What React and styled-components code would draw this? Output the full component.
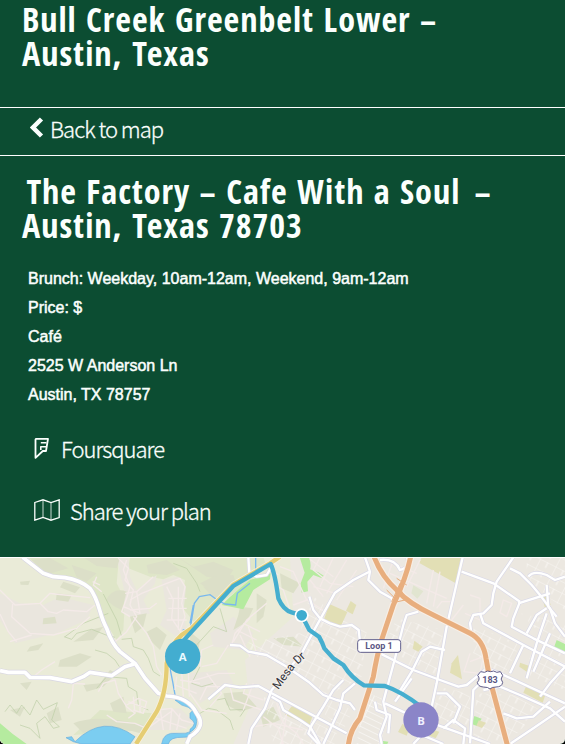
import React from 'react';
import styled, { createGlobalStyle } from 'styled-components';

const GlobalStyle = createGlobalStyle`
  *, *::before, *::after { box-sizing: border-box; }
  body { margin: 0; background: #000; }
`;

const Page = styled.main`
  display: flex;
  flex-direction: column;
  min-height: 100vh;
  overflow: hidden;
  border-radius: 0 0 5px 5px;
  background: #0c4d32;
  color: #fbfffd;
  font-family: "Liberation Sans", Arial, sans-serif;
`;

const Title = styled.h1`
  margin: 0;
  padding: 2px 40px 37px 22px;
  font: bold 34px/34px "Open Sans Condensed", "Roboto Condensed", sans-serif;
  letter-spacing: 1px;
  white-space: pre-wrap;
`;

const PlaceTitle = styled(Title).attrs({ as: 'h2' })`
  padding: 18px 40px 22px 22px;
`;

const BackBar = styled.nav`
  display: flex;
  height: 49px;
  padding: 0 30px;
  border-top: 1px solid #fff;
  border-bottom: 1px solid #fff;
`;

const ActionLink = styled.a`
  display: flex;
  align-items: center;
  gap: ${({ $gap }) => $gap}px;
  height: 40px;
  color: inherit;
  font: 300 22px/32px "Noto Sans CJK JP", "Noto Sans", sans-serif;
  letter-spacing: -1px;
  text-decoration: none;
  -webkit-text-stroke: 0.3px currentColor;
`;

const Details = styled.div`
  padding: 0 28px;
  font-size: 16px;
  line-height: 29px;
  -webkit-text-stroke: 0.5px currentColor;
`;

const Line = styled.p`
  margin: 0;
`;

const Actions = styled.div`
  display: flex;
  flex-direction: column;
  align-items: flex-start;
  gap: 22px;
  padding: 19px 34px 27px;
`;

const MapView = styled.svg`
  display: block;
  flex: 1 0 187px;
  width: 100%;
  height: 187px;
  border-top: 1px solid #fff;
  background: #ece8e1;
`;

const scrub = [
  'M250 22L360 25 350 55 290 48Z', 'M95 30L150 24 205 55 145 72Z', 'M215 45L290 70 260 95 230 82Z',
  'M190 95L240 112 225 130 180 112Z', 'M170 130L215 135 205 155 168 150Z', 'M318 150Q340 110 380 125L365 180 345 170Z',
  'M440 45L500 30 540 60 500 75 445 70Z', 'M60 95L90 92 85 105 62 104Z', 'M130 205L165 200 170 220 128 223Z',
  'M270 240L310 230 280 270 220 275Z', 'M180 330L240 310 275 320 230 350 175 350Z', 'M90 290L130 280 115 300 80 305Z',
  'M390 200L440 190 430 230 405 250Z', 'M440 245L470 230 500 255 480 300 455 275Z', 'M60 400L95 395 80 420Z',
  'M250 405L300 400 330 360 350 370 310 410 260 425Z', 'M330 460L370 440 380 490 340 485Z', 'M220 520Q290 490 430 525L420 550Q310 515 250 550Z',
  'M530 20L580 50 640 35 700 60 680 90 620 80Z', 'M610 110L680 95 690 130 640 145Z', 'M30 480L75 470 60 500Z', 'M140 490L175 470 185 510 150 520Z',
  'M720 170L760 175 740 215 700 240 715 195Z', 'M770 130L800 150 790 200 770 220Z', 'M840 70L900 100 880 130 845 115Z',
  'M570 245L600 270 590 340 572 360Z', 'M670 430L730 425 770 470 720 485 680 465Z', 'M780 490L820 470 840 510 790 530Z', 'M600 100L640 80 700 75 710 105 640 130Z', 'M820 265L880 260 910 290 850 285Z',
];

const woodland = [
  'M390 22L790 22 800 50 730 110 650 165 585 220 545 170 555 90 520 75 490 88 450 80 385 55Z',
  'M85 22L385 22 355 45 350 100 375 150 370 240 350 270 315 215 285 135 225 90 130 65Z',
  'M300 480L460 490 440 540 220 555Z',
];

const towns = [
  'M350 25L385 22 390 80 410 120 470 75 465 100 430 150 450 190 400 205 370 185 375 130Z',
  'M485 90L535 80 558 110 550 190 560 240 530 260 480 225 500 180Z',
  'M0 130L60 160 130 165 180 140 280 165 260 210 170 250 45 280 0 210Z',
  'M630 250L700 200 760 250 730 300 640 290Z', 'M460 480L540 475 585 520 540 540 430 540Z', 'M570 370L680 360 700 400 600 460 570 430Z',
];

const parks = [
  ['#b5eb9f', 'M665 165Q690 140 720 115L750 90 812 70 810 88 760 120 730 178 700 172Z'],
  ['#b5eb9f', 'M899 22L927 22Q935 45 930 58L955 67 971 77 964 84 940 75 922 95 924 124 905 128 902 100 914 68Z'],
  ['#b5eb9f', 'M0 520Q35 552 80 582L10 582 0 570Z'],
  ['#b5eb9f', 'M1670 270L1695 282 1695 311 1662 292Z'], ['#b5eb9f', 'M1423 498L1445 506 1430 528 1416 522Z'], ['#b5eb9f', 'M1145 572L1165 575 1162 582 1140 582Z'],
  ['#e2dfb5', 'M988 162L1042 186 1022 230 972 208Z'], ['#e2dfb5', 'M1052 153L1069 165 1058 193 1038 182Z'],
  ['#e2dfb5', 'M876 468L938 496 928 528 855 494Z'], ['#e2dfb5', 'M1265 22L1388 22 1370 101 1258 39Z'],
  ['#e2dfb5', 'M1355 340L1374 315 1386 388 1350 368Z'], ['#e2dfb5', 'M1243 272L1268 290 1255 305 1238 296Z'],
  ['#e2dfb5', 'M1625 136L1643 140 1652 164 1635 174Z'], ['#e2dfb5', 'M1560 338L1595 350 1587 370 1558 350Z'],
  ['#e2dfb5', 'M1580 405L1637 433 1628 458 1570 428Z'], ['#e2dfb5', 'M1436 511L1458 518 1446 534 1429 527Z'],
  ['#e2dfb5', 'M1207 522L1230 530 1220 557 1194 546Z'], ['#e2dfb5', 'M1290 537L1318 545 1307 565 1284 556Z'], ['#e1e5d0', 'M1240 106L1270 124 1252 146 1234 130Z'],
];

const contours = [
  'M192 260L215 268 230 250 275 238 318 255 345 262', 'M285 300L320 310 345 330 358 350', 'M310 132L350 210 365 260',
  'M520 40L560 55 590 100 600 125', 'M365 268L395 265 400 290 430 300 445 325 460 365 480 378', 'M15 485L30 465 50 490 65 465 90 495 110 450 130 478 172 458 155 510 178 530',
  'M178 530L160 535 135 500 110 520 120 565 90 535 60 525', 'M290 415L320 380 380 385 385 410 410 425 415 465 445 480', 'M195 260L250 220 325 190',
  'M660 175L680 245 640 230 585 290', 'M600 350L575 400 605 410 640 400', 'M600 490L625 475 650 480 690 510 700 540', 'M650 450L675 445 690 480 735 478 720 500',
];

const lanes = [
  'M0 120L45 165 120 160 150 130 165 132 270 143', 'M120 160L145 185 170 190 190 180 260 185 285 165', 'M38 162L35 200 90 250 160 255 230 235 270 200',
  'M0 192L25 245 50 275 M30 275L95 255', 'M165 335L125 360 95 385 M290 80L280 105 305 125 M278 95L300 105', 'M355 25L385 55 375 90 400 120 390 165 410 200 380 245 345 275',
  'M380 30L370 60 390 110 380 145 365 185 390 200', 'M410 125L460 80 M390 150L425 130 500 100 540 85 555 110 545 160 555 200 540 240', 'M400 200L440 250 460 290 470 350 485 375',
  'M375 130L410 125 420 190 370 170 M390 180L450 175 470 160', 'M500 110L520 150 515 205 545 250 M535 110L535 240 M505 145H560 M505 175H560 M500 210H560', 'M220 400L215 450 205 475 M220 400L255 402',
  'M295 425L310 400 345 390 355 430 380 470 405 490 385 505 M320 495L350 515 405 520 440 535', 'M380 465L415 445 440 455 430 490 400 480 M400 440L405 490 M420 450L420 490 M385 455L440 475',
  'M450 525L470 480 515 475 545 510 580 520 M455 500L560 535 M480 475L490 540 M515 475L510 540 M540 490L530 540 M450 530L520 480', 'M540 390L600 400 M530 380L525 420 M545 365L550 440 M565 365L568 440 M525 405L590 430',
  'M530 320L525 300 560 280 565 230 M555 300L600 310', 'M695 285L705 250 750 205 M710 240L770 270 M730 220L780 245 M640 285L605 300 600 350 M685 285L650 340 605 350', 'M720 255L750 320 M745 230L770 310 M700 275L740 210 800 160',
  'M570 395L655 370 705 370 M600 450L620 410 670 410 M570 430L605 480 680 490 M620 370L665 430 630 470', 'M740 400L730 430 790 450 M760 400L730 480 M690 410L700 450 785 480', 'M830 460L850 520 890 550 910 582 M860 490L845 582 M790 500L835 535 850 582 M760 530L820 520 910 540',
  'M820 100L850 120 870 180 M800 50L835 75 M840 50L880 65 920 150', 'M930 28L1000 80 M960 22L940 60 990 100 1060 110 M1000 22L960 110 M1040 30L980 130 M1070 60L1010 150', 'M920 150L970 180 M880 165L935 145 M940 110L1005 130 M930 90L970 140',
  'M1395 190L1440 210 1440 145 1410 135 M1180 30L1150 115 M1190 45L1250 70 M1260 30L1220 110 M1300 60L1280 160 M1320 65L1300 170 M1170 70L1340 145',
  'M1310 175L1325 155H1355 M1390 165L1355 210 M1510 150L1535 160 1520 200 1500 188Z', 'M1410 310L1392 365 1440 370 1450 320 1410 335',
];

const roads = [
  'M625 448L675 405 720 412 775 408 815 430 1040 550', 'M690 285L720 287 745 305 800 315 860 350 925 395 970 435 1010 450 1050 460 1065 480',
  'M928 140L940 180 960 205 990 220 1020 230 1055 225 1076 240 1080 275', 'M1108 65L1060 90 1005 128 940 245 905 310 815 420 795 475 755 535 745 582',
  'M815 440L840 455 850 480 900 510 930 530 960 582', 'M1030 390L1000 420 970 470 935 525 925 550 955 582', 'M1065 400L1030 430 1020 475 970 582',
  'M745 22L748 70 770 80 800 75 815 50', 'M1095 22L1110 65 1105 90 1140 125 1175 145 1180 180', 'M1140 30Q1185 25 1200 60Q1235 50 1220 22', 'M1230 30L1210 105 1180 170',
  'M1255 185L1220 195 1210 225 1185 325 1150 455 1160 500 1140 555 1145 582', 'M1388 22L1340 230 1310 400 1295 470 1290 520', 'M1195 430L1235 365 1265 305 1290 290 1335 300',
  'M1140 310L1240 360 1320 390 1375 410 1400 405 1460 355 1500 370 1695 460', 'M1385 65L1480 100 1560 155', 'M1540 22L1490 95 1480 130 1475 165 1450 190 1420 195 1410 220 1415 255',
  'M1440 190L1450 220 1580 290 1695 350', 'M1560 155L1540 205 1535 230 1600 265 1695 310', 'M1530 55L1560 70 1595 105 1620 135 1650 175 1665 220 1695 260', 'M1585 80Q1600 60 1640 75L1665 90 1695 80',
  'M1555 160L1650 130 M1640 105L1645 170 1670 200', 'M1640 175L1610 195 1580 250 M1640 190L1610 280 1580 385', 'M1650 250L1600 365 M1570 285L1530 370',
  'M1460 355L1445 395 1420 420 1410 580', 'M1310 430L1340 430 1380 470 1360 520', 'M1155 460L1240 500 1340 535 1470 582', 'M1695 470L1600 535 1530 582',
  'M1450 420L1500 410 1560 435 1650 475 1695 515', 'M1510 490L1550 505 1600 500 1650 455 M1620 440L1650 400 1695 350', 'M1240 582L1265 555 1330 582 M1330 535L1360 510 1395 535 1390 582', 'M1125 455L1130 480 1170 495 1165 550', 'M1235 385L1185 455',
];

const mainRoads = ['M68 22L130 70 160 80 195 83Q240 90 270 115C300 155 295 190 320 235Q335 280 360 305L405 340 435 385 475 430 500 438Q565 440 590 490Q620 530 570 560L560 582', 'M0 362L25 367H75L90 382 150 383 215 395 250 380 270 367 335 377 375 350 403 342'];

const route = 'M548 275L575 245 700 108 812 42Q825 70 835 145Q850 180 875 187L905 196 928 240 957 260Q968 280 973 295L1000 325 1030 345Q1055 385 1092 406L1155 408Q1205 425 1263 470';

function BackIcon() {
  return (
    <svg width="14" height="22" viewBox="0 0 14 22" aria-hidden="true">
      <path d="M11.500 2L3 10.500 11.500 19" fill="none" stroke="currentColor" strokeWidth="4.500" />
    </svg>
  );
}

function FoursquareIcon() {
  return (
    <svg width="17" height="22" viewBox="0 0 17 22" fill="none" stroke="currentColor" strokeWidth="1.800" strokeLinejoin="round" aria-hidden="true">
      <path d="M2 1.800H14L12 14H8.800L1.500 20.800V2.500Z" />
      <path d="M12.500 5.800H6.800M12 9.800H6.800V13" strokeWidth="1.600" />
    </svg>
  );
}

function FoldedMapIcon() {
  return (
    <svg width="26" height="22" viewBox="0 0 26 22" fill="none" stroke="currentColor" aria-hidden="true">
      <path d="M.8 3.500L9 .8 17 3.500 25.200 .8V18.500L17 21.200 9 18.500 .8 21.200Z" strokeWidth="1.300" />
      <path d="M9 1V18.500M17 3.500V21" strokeWidth=".8" />
    </svg>
  );
}

function RouteMap() {
  return (
    <MapView viewBox="0 24 1695 558" preserveAspectRatio="xMidYMid slice" role="img" aria-label="Route from A to B">
      <defs>
        <pattern id="blocks" width="52" height="31" patternUnits="userSpaceOnUse" patternTransform="rotate(27)">
          <path d="M0 0H52M0 0V31M26 0V18" fill="none" stroke="#fbf9f7" strokeWidth="2.500" />
        </pattern>
        <pattern id="narrowBlocks" width="75" height="17" patternUnits="userSpaceOnUse" patternTransform="rotate(26)">
          <path d="M0 0H75M0 0V17" fill="none" stroke="#fff" strokeWidth="3" />
        </pattern>
        <path id="mesaPath" d="M835 420L886 350 964 280" />
      </defs>
      <path fill="#eaebd8" d="M0 22H870L880 200 735 330 750 470 700 582H0Z" />
      {woodland.map((d) => <path key={d} d={d} fill="#dfe6c8" />)}
      {towns.map((d) => <path key={d} d={d} fill="#eae6de" />)}
      {scrub.map((d) => <path key={d} d={d} fill="#dcdfc8" />)}
      <g fill="none" stroke="#bbcda4" strokeWidth="2">
        {contours.map((d) => <path key={d} d={d} />)}
      </g>
      <path fill="url(#blocks)" d="M735 280L900 250 930 130 1000 190 1100 240 1085 380 980 440 860 350 740 310ZM1190 205L1330 240 1305 390 1140 310ZM1420 225L1560 285 1510 380 1420 310ZM1560 190L1695 220V420L1570 370 1620 250ZM1310 410L1410 430V540L1300 500ZM1430 430L1540 435 1620 480 1520 582 1420 570ZM1580 22H1695V180L1580 90ZM790 440L1010 550V582H820ZM990 450L1060 480 1030 540 970 490Z" />
      <path fill="url(#narrowBlocks)" d="M1095 425L1155 450 1165 500 1140 582H1070Z" />
      {parks.map(([fill, d]) => <path key={d} d={d} fill={fill} />)}
      <path fill="#7bcdf1" stroke="#68ade0" strokeWidth="2" d="M198 563L215 560 225 575Q310 490 405 560L390 582H245L220 575ZM525 450L545 465Q590 475 590 515Q590 555 530 550Q490 545 485 582H505Q510 560 550 562Q610 560 600 515Q605 475 545 450ZM570 490L582 478Q605 500 600 535L570 552V538Q595 520 570 505Z" />
      <path fill="none" stroke="#79b8ee" strokeWidth="4" d="M510 355L518 395 526 440M548 240L570 240 583 160 598 140 630 134 652 150 675 162 707 165 712 130 750 100M570 220L580 165M767 22V60" />
      <g fill="none" stroke="#f4eae8" strokeWidth="4" strokeLinejoin="round">
        {lanes.map((d) => <path key={d} d={d} />)}
      </g>
      <g fill="none" stroke="#dbdae7" strokeWidth="11" strokeLinejoin="round">
        {roads.map((d) => <path key={d} d={d} />)}
      </g>
      <g fill="none" stroke="#fff" strokeWidth="7" strokeLinejoin="round">
        {roads.map((d) => <path key={d} d={d} />)}
      </g>
      {[['#d9d7e3', 15], ['#fff', 11]].map(([color, width]) => (
        <g key={color} fill="none" stroke={color} strokeWidth={width} strokeLinejoin="round">
          {mainRoads.map((d) => <path key={d} d={d} />)}
        </g>
      ))}
      {[['#f6f0dc', 18], ['#e5cd73', 13]].map(([color, width]) => (
        <path key={color} fill="none" stroke={color} strokeWidth={width} d="M408 582L470 485Q500 430 500 340Q510 285 545 255L575 235 700 104 810 40 840 20" />
      ))}
      {[['#f8eee5', 22], ['#e8ae7e', 15]].map(([color, width]) => (
        <g key={color} fill="none" stroke={color} strokeWidth={width}>
          <path d="M1232 20Q1220 80 1180 165L1143 275Q1130 320 1120 380L1080 505Q1050 540 1045 585" />
          <path d="M1122 20Q1145 80 1190 120Q1225 160 1300 195L1410 250Q1450 270 1458 325L1470 390 1522 585" />
        </g>
      ))}
      <path fill="none" stroke="#e8ae7e" strokeWidth="3" d="M1175 155L1200 100M1200 110L1215 150 1180 158M1185 145L1160 120M1220 105L1190 85" />
      <path d={route} fill="none" stroke="#45aecf" strokeWidth="13" strokeLinejoin="round" />
      <circle cx="905" cy="196" r="21" fill="#fff" />
      <circle cx="905" cy="196" r="16" fill="#3eaccf" />
      <text fontFamily="Roboto, sans-serif" fontSize="35" fill="#34343a" stroke="#f5f1ed" strokeWidth="5" paintOrder="stroke">
        <textPath href="#mesaPath">Mesa Dr</textPath>
      </text>
      <g fontFamily="Roboto, sans-serif" fontWeight="700" textAnchor="middle" fill="#5b5785">
        <rect x="1073" y="269" width="129" height="38" rx="8" fill="#fff" stroke="#625f8c" strokeWidth="3" />
        <text x="1137" y="298" fontSize="27">Loop 1</text>
        <path fill="#fff" stroke="#625f8c" strokeWidth="3" d="M1442 365Q1455 370 1463 363Q1472 367 1481 363Q1490 370 1501 365L1508 376Q1499 388 1508 397Q1506 411 1488 411Q1475 411 1470 417Q1465 411 1450 411Q1434 410 1432 397Q1442 387 1433 376Z" />
        <text x="1470" y="398" fontSize="27">183</text>
      </g>
      <g fontFamily="Open Sans, sans-serif" fontWeight="700" fontSize="34" textAnchor="middle" fill="#fff">
        <circle cx="548" cy="319" r="53" fill="#43add0" />
        <text x="548" y="333" fill="#eafaff">A</text>
        <circle cx="1263" cy="510" r="53" fill="#8b85c8" />
        <text x="1263" y="524" fill="#f0efff">B</text>
      </g>
    </MapView>
  );
}

export default function App() {
  return (
    <Page>
      <GlobalStyle />
      <Title>Bull Creek Greenbelt Lower – Austin, Texas</Title>
      <BackBar>
        <ActionLink href="#map" $gap={6}><BackIcon />Back to map</ActionLink>
      </BackBar>
      <PlaceTitle>{'\u200aThe Factory – Cafe With a Soul\u00a0\u200a– Austin, Texas 78703'}</PlaceTitle>
      <Details>
        <Line>Brunch: Weekday, 10am-12am, Weekend, 9am-12am</Line>
        <Line>Price: $</Line>
        <Line>Café</Line>
        <Line>2525 W Anderson Ln</Line>
        <Line>Austin, TX 78757</Line>
      </Details>
      <Actions>
        <ActionLink href="#foursquare" $gap={10}><FoursquareIcon />Foursquare</ActionLink>
        <ActionLink href="#share" $gap={10}><FoldedMapIcon />Share your plan</ActionLink>
      </Actions>
      <RouteMap />
    </Page>
  );
}
